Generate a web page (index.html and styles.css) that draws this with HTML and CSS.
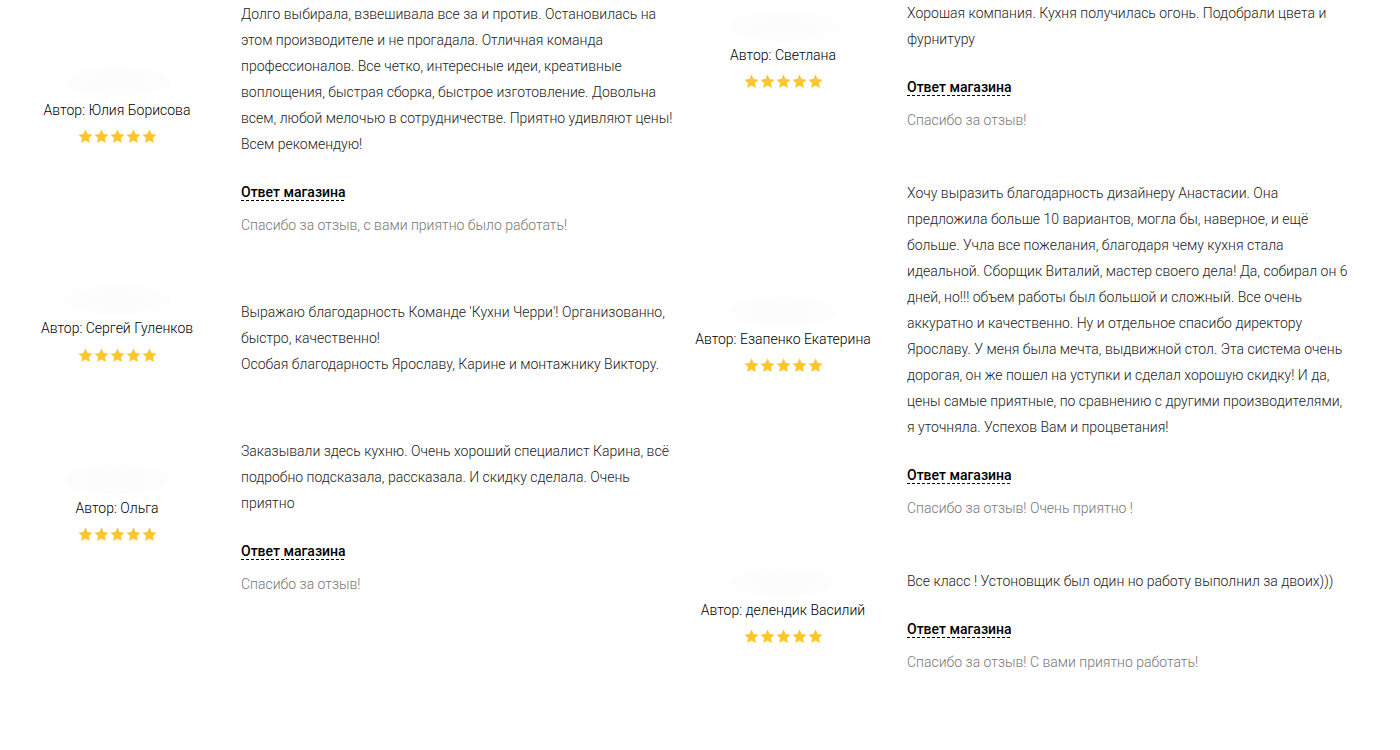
FILE: index.html
```html
<!DOCTYPE html>
<html lang="ru">
<head>
<meta charset="utf-8">
<title>Отзывы</title>
<link rel="stylesheet" href="styles.css">
</head>
<body>
<svg width="0" height="0" class="defs">
  <defs>
    <symbol id="star" viewBox="0 0 24 24">
      <path d="M12 0.8l3.4 7.3 7.9.9-5.9 5.4 1.6 7.9L12 18.3l-7 4 1.6-7.9L.7 9l7.9-.9z"/>
    </symbol>
  </defs>
</svg>
<main class="reviews">
  <section class="col col-left">
    <article class="review">
      <div class="author">
        <div class="avatar"></div>
        <div class="name">Автор: Юлия Борисова</div>
        <div class="stars"><svg><use href="#star"/></svg><svg><use href="#star"/></svg><svg><use href="#star"/></svg><svg><use href="#star"/></svg><svg><use href="#star"/></svg></div>
      </div>
      <div class="body">
        <p class="text">Долго выбирала, взвешивала все за и против. Остановилась на этом производителе и не прогадала. Отличная команда профессионалов. Все четко, интересные идеи, креативные воплощения, быстрая сборка, быстрое изготовление. Довольна всем, любой мелочью в сотрудничестве. Приятно удивляют цены! Всем рекомендую!</p>
        <div class="answer-title"><span>Ответ магазина</span></div>
        <p class="answer">Спасибо за отзыв, с вами приятно было работать!</p>
      </div>
    </article>
    <article class="review">
      <div class="author">
        <div class="avatar"></div>
        <div class="name">Автор: Сергей Гуленков</div>
        <div class="stars"><svg><use href="#star"/></svg><svg><use href="#star"/></svg><svg><use href="#star"/></svg><svg><use href="#star"/></svg><svg><use href="#star"/></svg></div>
      </div>
      <div class="body">
        <p class="text">Выражаю благодарность Команде 'Кухни Черри'! Организованно, быстро, качественно!<br>Особая благодарность Ярославу, Карине и монтажнику Виктору.</p>
      </div>
    </article>
    <article class="review">
      <div class="author">
        <div class="avatar"></div>
        <div class="name">Автор: Ольга</div>
        <div class="stars"><svg><use href="#star"/></svg><svg><use href="#star"/></svg><svg><use href="#star"/></svg><svg><use href="#star"/></svg><svg><use href="#star"/></svg></div>
      </div>
      <div class="body">
        <p class="text">Заказывали здесь кухню. Очень хороший специалист Карина, всё подробно подсказала, рассказала. И скидку сделала. Очень приятно</p>
        <div class="answer-title"><span>Ответ магазина</span></div>
        <p class="answer">Спасибо за отзыв!</p>
      </div>
    </article>
  </section>
  <section class="col col-right">
    <article class="review">
      <div class="author">
        <div class="avatar"></div>
        <div class="name">Автор: Светлана</div>
        <div class="stars"><svg><use href="#star"/></svg><svg><use href="#star"/></svg><svg><use href="#star"/></svg><svg><use href="#star"/></svg><svg><use href="#star"/></svg></div>
      </div>
      <div class="body">
        <p class="text">Хорошая компания. Кухня получилась огонь. Подобрали цвета и фурнитуру</p>
        <div class="answer-title"><span>Ответ магазина</span></div>
        <p class="answer">Спасибо за отзыв!</p>
      </div>
    </article>
    <article class="review">
      <div class="author">
        <div class="avatar"></div>
        <div class="name">Автор: Езапенко Екатерина</div>
        <div class="stars"><svg><use href="#star"/></svg><svg><use href="#star"/></svg><svg><use href="#star"/></svg><svg><use href="#star"/></svg><svg><use href="#star"/></svg></div>
      </div>
      <div class="body">
        <p class="text">Хочу выразить благодарность дизайнеру Анастасии. Она предложила больше 10 вариантов, могла бы, наверное, и ещё больше. Учла все пожелания, благодаря чему кухня стала идеальной. Сборщик Виталий, мастер своего дела! Да, собирал он 6 дней, но!!! объем работы был большой и сложный. Все очень аккуратно и качественно. Ну и отдельное спасибо директору Ярославу. У меня была мечта, выдвижной стол. Эта система очень дорогая, он же пошел на уступки и сделал хорошую скидку! И да, цены самые приятные, по сравнению с другими производителями, я уточняла. Успехов Вам и процветания!</p>
        <div class="answer-title"><span>Ответ магазина</span></div>
        <p class="answer">Спасибо за отзыв! Очень приятно !</p>
      </div>
    </article>
    <article class="review">
      <div class="author">
        <div class="avatar"></div>
        <div class="name">Автор: делендик Василий</div>
        <div class="stars"><svg><use href="#star"/></svg><svg><use href="#star"/></svg><svg><use href="#star"/></svg><svg><use href="#star"/></svg><svg><use href="#star"/></svg></div>
      </div>
      <div class="body">
        <p class="text">Все класс ! Устоновщик был один но работу выполнил за двоих)))</p>
        <div class="answer-title"><span>Ответ магазина</span></div>
        <p class="answer">Спасибо за отзыв! С вами приятно работать!</p>
      </div>
    </article>
  </section>
</main>
</body>
</html>
```
FILE: styles.css
```css
html, body {
  margin: 0;
  padding: 0;
  background: #fff;
}

body {
  font-family: Roboto, "Noto Sans", "Liberation Sans", sans-serif;
  font-size: 14px;
  line-height: 26px;
  color: #333;
}

.defs {
  position: absolute;
  width: 0;
  height: 0;
  overflow: hidden;
}

.reviews {
  display: flex;
  padding-left: 17px;
}

.col {
  width: 666px;
  display: flex;
  flex-direction: column;
  gap: 47px;
}

.col-left {
  padding-top: 1px;
}

.review {
  display: flex;
  align-items: center;
  gap: 24px;
}

.author {
  width: 200px;
  flex: none;
  display: flex;
  flex-direction: column;
  align-items: center;
  padding-bottom: 23px;
}

.col-right .author {
  margin-top: -4px;
}

.avatar {
  width: 110px;
  height: 30px;
  border-radius: 50%;
  background: radial-gradient(ellipse at center, #fcfcfc 0%, #fdfdfd 60%, #fff 100%);
}

.name {
  font-weight: 300;
  color: #000;
  height: 26px;
  white-space: nowrap;
}

.stars {
  display: flex;
  gap: 1px;
  height: 26px;
  margin-top: 1px;
  align-items: center;
}

.stars svg {
  width: 15px;
  height: 15px;
  fill: #fdc62f;
}

.body {
  width: 442px;
  flex: none;
}

.text {
  margin: 0;
  font-weight: 300;
  color: #222;
}

.answer-title {
  margin-top: 22px;
  font-weight: 500;
  color: #000;
}

.answer-title span {
  padding-bottom: 1px;
  background-image: linear-gradient(to right, #000 60%, transparent 60%);
  background-size: 5px 1px;
  background-repeat: repeat-x;
  background-position: left bottom;
}

.answer {
  margin: 7px 0 0;
  font-weight: 300;
  color: #777;
}
```
